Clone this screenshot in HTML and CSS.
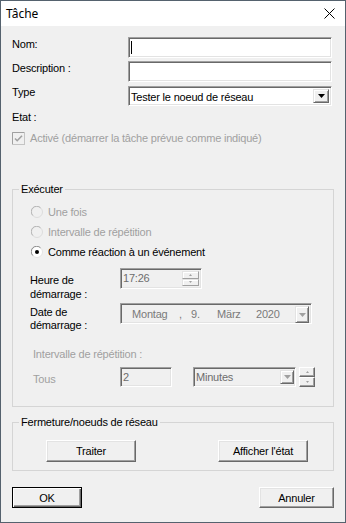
FILE: index.html
```html
<!DOCTYPE html>
<html lang="fr">
<head>
    <meta charset="UTF-8">
    <meta name="viewport" content="width=device-width, initial-scale=1.0">
    <title>Tâche</title>
    <link rel="stylesheet" href="styles.css">
</head>
<body>

<div class="window">
    <div class="titlebar">
        <span class="title">Tâche</span>
        <svg class="close" width="11" height="11" viewBox="0 0 11 11">
            <path d="M0.5 0.5 L10.5 10.5 M10.5 0.5 L0.5 10.5" stroke="#000" stroke-width="1" fill="none"/>
        </svg>
    </div>

    <div class="dialog">
        <!-- Nom / Description / Type -->
        <div class="form-grid">
            <label class="lbl">Nom:</label>
            <div class="edit"><span class="caret"></span></div>
            <label class="lbl">Description :</label>
            <div class="edit"></div>
            <label class="lbl">Type</label>
            <div class="combo">
                <span class="combo-text">Tester le noeud de réseau</span>
                <span class="drop-btn">
                    <svg width="7" height="4" viewBox="0 0 7 4"><path d="M0 0 H7 L3.5 4 Z" fill="#000"/></svg>
                </span>
            </div>
        </div>

        <div class="etat">Etat :</div>

        <div class="check-row disabled">
            <svg class="checkbox" width="13" height="13" viewBox="0 0 13 13">
                <rect x="0.5" y="0.5" width="12" height="12" fill="#f0f0f0" stroke="#c4c4c4"/>
                <path d="M0.5 12 V0.5 H12" stroke="#a0a0a0" fill="none"/>
                <path d="M3 6.5 L5.2 8.7 L10 3.8" stroke="#a0a0a0" stroke-width="1.6" fill="none"/>
            </svg>
            <span>Activé (démarrer la tâche prévue comme indiqué)</span>
        </div>

        <!-- Exécuter -->
        <fieldset class="group group-exec">
            <legend>Exécuter</legend>

            <div class="radio-row disabled">
                <svg class="radio" width="12" height="12" viewBox="0 0 12 12">
                    <circle cx="6" cy="6" r="5.5" fill="#f0f0f0" stroke="#dcdcdc"/>
                    <path d="M1.8 9.5 A5 5 0 0 1 9.5 1.8" stroke="#b4b4b4" fill="none"/>
                </svg>
                <span>Une fois</span>
            </div>
            <div class="radio-row disabled">
                <svg class="radio" width="12" height="12" viewBox="0 0 12 12">
                    <circle cx="6" cy="6" r="5.5" fill="#f0f0f0" stroke="#dcdcdc"/>
                    <path d="M1.8 9.5 A5 5 0 0 1 9.5 1.8" stroke="#b4b4b4" fill="none"/>
                </svg>
                <span>Intervalle de répétition</span>
            </div>
            <div class="radio-row">
                <svg class="radio" width="12" height="12" viewBox="0 0 12 12">
                    <circle cx="6" cy="6" r="5.5" fill="#fff" stroke="#e3e3e3"/>
                    <path d="M1.8 9.5 A5 5 0 0 1 9.5 1.8" stroke="#8a8a8a" fill="none"/>
                    <circle cx="6" cy="6" r="2" fill="#000"/>
                </svg>
                <span>Comme réaction à un événement</span>
            </div>

            <div class="field-row time-row">
                <div class="field-lbl">Heure de<br>démarrage :</div>
                <div class="edit disabled-edit time-box">
                    <span class="val">17:26</span>
                    <span class="spin">
                        <span class="spin-btn"><svg width="3" height="2" viewBox="0 0 3 2"><path d="M0 2 H3 L1.5 0 Z" fill="#a0a0a0"/></svg></span>
                        <span class="spin-btn"><svg width="3" height="2" viewBox="0 0 3 2"><path d="M0 0 H3 L1.5 2 Z" fill="#a0a0a0"/></svg></span>
                    </span>
                </div>
            </div>

            <div class="field-row date-row">
                <div class="field-lbl">Date de<br>démarrage :</div>
                <div class="edit disabled-edit date-box">
                    <span class="seg seg-day">Montag</span>
                    <span class="seg seg-comma">,</span>
                    <span class="seg seg-num">9.</span>
                    <span class="seg seg-month">März</span>
                    <span class="seg">2020</span>
                    <span class="drop-btn drop-small">
                        <svg width="7" height="4" viewBox="0 0 7 4"><path d="M0 0 H7 L3.5 4 Z" fill="#a0a0a0"/></svg>
                    </span>
                </div>
            </div>

            <div class="interval-lbl">Intervalle de répétition :</div>

            <div class="field-row tous-row">
                <div class="field-lbl tous-lbl">Tous</div>
                <div class="edit disabled-edit count-box"><span class="val">2</span></div>
                <div class="edit disabled-edit unit-box">
                    <span class="val">Minutes</span>
                    <span class="drop-btn drop-small">
                        <svg width="7" height="4" viewBox="0 0 7 4"><path d="M0 0 H7 L3.5 4 Z" fill="#a0a0a0"/></svg>
                    </span>
                </div>
                <div class="spin spin-alone">
                    <span class="spin-btn"><svg width="3" height="2" viewBox="0 0 3 2"><path d="M0 2 H3 L1.5 0 Z" fill="#a0a0a0"/></svg></span>
                    <span class="spin-btn"><svg width="3" height="2" viewBox="0 0 3 2"><path d="M0 0 H3 L1.5 2 Z" fill="#a0a0a0"/></svg></span>
                </div>
            </div>
        </fieldset>

        <!-- Fermeture/noeuds -->
        <fieldset class="group group-net">
            <legend>Fermeture/noeuds de réseau</legend>
            <div class="btn-row">
                <button class="btn btn-wide">Traiter</button>
                <button class="btn btn-wide">Afficher l'état</button>
            </div>
        </fieldset>

        <div class="footer">
            <button class="btn btn-default btn-ok">OK</button>
            <button class="btn btn-cancel">Annuler</button>
        </div>
    </div>
</div>

</body>
</html>
```

FILE: styles.css
```css
* {
    box-sizing: border-box;
}
body {
    margin: 0;
    font-family: "Liberation Sans", Arial, sans-serif;
    font-size: 11px;
    letter-spacing: -0.2px;
    color: #000;
}
.window {
    width: 346px;
    height: 523px;
    border: 1px solid #55626e;
    background: #f0f0f0;
}
.titlebar {
    height: 25px;
    background: #fff;
    display: flex;
    align-items: center;
    justify-content: space-between;
    padding: 0 10px 0 5px;
}
.title {
    font-family: "Noto Sans", sans-serif;
    font-size: 12px;
    letter-spacing: 0;
}
.dialog {
    padding: 11px 11px 0;
}

/* top form */
.form-grid {
    display: grid;
    grid-template-columns: 116px 204px;
    grid-template-rows: 21px 21px 21px;
    row-gap: 3px;
}
.lbl {
    line-height: 13px;
    padding-top: 1px;
}
.edit {
    background: #fff;
    border: 1px solid;
    border-color: #a0a0a0 #fff #fff #a0a0a0;
    box-shadow: inset 1px 1px #696969, inset -1px -1px #e3e3e3;
    display: flex;
    align-items: center;
    padding: 0 2px;
}
.caret {
    width: 1px;
    height: 13px;
    background: #000;
}
.combo {
    margin-top: 1px;
    height: 20px;
    background: #fff;
    border: 1px solid;
    border-color: #a0a0a0 #fff #fff #a0a0a0;
    box-shadow: inset 1px 1px #696969, inset -1px -1px #e3e3e3;
    display: flex;
    align-items: stretch;
    padding: 2px;
}
.combo-text {
    flex: 1;
    line-height: 16px;
}
.drop-btn {
    width: 16px;
    background: #f0f0f0;
    border: 1px solid;
    border-color: #e3e3e3 #696969 #696969 #e3e3e3;
    box-shadow: inset 1px 1px #fff, inset -1px -1px #a0a0a0;
    display: flex;
    align-items: center;
    justify-content: center;
}
.drop-small {
    width: 14px;
    margin-left: auto;
    align-self: stretch;
}

.etat {
    margin-top: 5px;
    line-height: 13px;
}
.disabled {
    color: #a0a0a0;
}
.check-row {
    margin-top: 7px;
    height: 14px;
    display: flex;
    align-items: center;
    gap: 5px;
}

/* group boxes */
.group {
    margin: 37px 0 0;
    padding: 6px 0 19px;
    border: 1px solid #d5d5d5;
    min-width: 0;
}
.group legend {
    line-height: 14px;
    padding: 0 2px;
    margin-left: 6px;
}
.group-net {
    margin-top: 8px;
    padding: 11px 0 8px;
}

.radio-row {
    height: 20px;
    display: flex;
    align-items: center;
    gap: 5px;
    padding-left: 18px;
}

.field-row {
    display: flex;
    align-items: flex-start;
    padding-left: 17px;
}
.field-lbl {
    width: 90px;
    line-height: 14px;
}
.time-row {
    margin-top: 6px;
}
.time-row .field-lbl {
    margin-top: 5px;
}
.date-row {
    margin-top: 2px;
}
.date-row .field-lbl {
    margin-top: 3px;
    line-height: 13px;
}
.disabled-edit {
    background: #f0f0f0;
    color: #6d6d6d;
    height: 21px;
}
.val {
    line-height: 15px;
}
.time-box {
    width: 82px;
    padding: 2px;
    align-items: stretch;
}
.time-box .val {
    flex: 1;
    align-self: center;
}
.spin {
    width: 17px;
    display: flex;
    flex-direction: column;
}
.spin-btn {
    flex: 1;
    background: #f0f0f0;
    border: 1px solid;
    border-color: #e3e3e3 #a0a0a0 #a0a0a0 #e3e3e3;
    box-shadow: inset 1px 1px #fff;
    display: flex;
    align-items: center;
    justify-content: center;
}
.date-box {
    width: 192px;
    padding: 2px 2px 2px 11px;
    align-items: center;
    color: #7a7a7a;
}
.seg {
    display: inline-block;
}
.seg-day {
    width: 47px;
}
.seg-comma {
    width: 12px;
}
.seg-num {
    width: 26px;
}
.seg-month {
    width: 39px;
}
.date-box .drop-small {
    height: 17px;
}

.interval-lbl {
    margin-top: 15px;
    line-height: 14px;
    padding-left: 20px;
    color: #a0a0a0;
}
.tous-row {
    margin-top: 6px;
    padding-left: 20px;
}
.tous-lbl {
    width: 87px;
    margin-top: 5px;
    color: #a0a0a0;
}
.count-box {
    width: 52px;
    height: 20px;
    padding-left: 2px;
}
.unit-box {
    width: 103px;
    height: 20px;
    margin-left: 21px;
    padding: 2px 1px 2px 2px;
    align-items: stretch;
}
.unit-box .val {
    align-self: center;
}
.spin-alone {
    height: 20px;
    width: 16px;
    margin-left: 3px;
}
.spin-alone .spin-btn {
    border-color: #fff #696969 #696969 #fff;
    box-shadow: inset -1px -1px #a0a0a0;
}

/* buttons */
.btn {
    font-family: inherit;
    font-size: 11px;
    letter-spacing: -0.2px;
    color: #000;
    background: #f0f0f0;
    border: 1px solid;
    border-color: #fff #696969 #696969 #fff;
    box-shadow: inset -1px -1px #a0a0a0, inset 1px 1px #e3e3e3;
    padding: 0;
    height: 22px;
}
.btn-row {
    display: flex;
    gap: 82px;
    padding-left: 33px;
}
.btn-wide {
    width: 90px;
}
.footer {
    margin-top: 16px;
    display: flex;
    justify-content: space-between;
}
.btn-ok {
    width: 70px;
    height: 21px;
}
.btn-cancel {
    width: 75px;
    height: 21px;
}
.btn-default {
    border: 1px solid #000;
    box-shadow: inset 1px 1px #fff, inset -1px -1px #696969, inset -2px -2px #a0a0a0;
}
```
